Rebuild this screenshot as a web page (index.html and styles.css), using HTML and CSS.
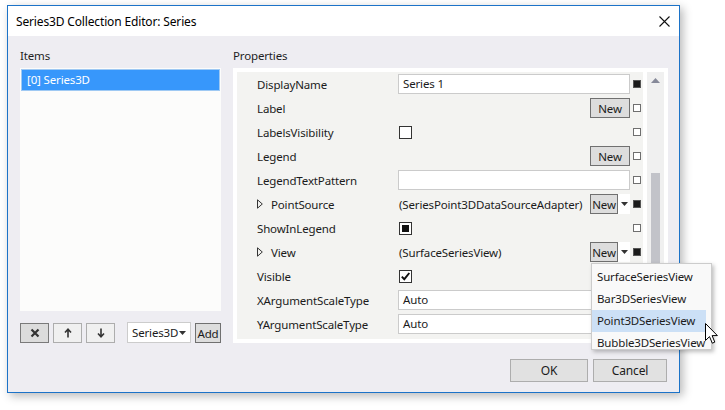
FILE: index.html
```html
<!DOCTYPE html>
<html>
<head>
<meta charset="utf-8">
<title>Series3D Collection Editor</title>
<link rel="stylesheet" href="styles.css">
</head>
<body>
<div class="window">
  <div class="titlebar">
    <span class="title">Series3D Collection Editor: Series</span>
    <svg class="close" width="11" height="11" viewBox="0 0 11 11"><path d="M0.5 0.5L10.5 10.5M10.5 0.5L0.5 10.5" stroke="#111" stroke-width="1.1"/></svg>
  </div>
  <div class="content">
    <div class="main">
      <div class="col-left">
        <div class="heading">Items</div>
        <div class="list">
          <div class="list-item selected">[0] Series3D</div>
        </div>
        <div class="toolbar">
          <button class="tb tb-dark"><svg width="10" height="10" viewBox="0 0 10 10"><path d="M1.5 1.5L8.5 8.5M8.5 1.5L1.5 8.5" stroke="#333" stroke-width="2.2"/></svg></button>
          <button class="tb"><svg width="8" height="10" viewBox="0 0 8 10"><path d="M4 9.5V2M1 4.5L4 1.2L7 4.5" stroke="#333" stroke-width="1.6" fill="none"/></svg></button>
          <button class="tb"><svg width="8" height="10" viewBox="0 0 8 10"><path d="M4 0.5V8M1 5.5L4 8.8L7 5.5" stroke="#333" stroke-width="1.6" fill="none"/></svg></button>
          <div class="combo"><span>Series3D</span><svg width="7" height="4" viewBox="0 0 7 4"><path d="M0 0H7L3.5 4Z" fill="#333"/></svg></div>
          <button class="add">Add</button>
        </div>
      </div>
      <div class="col-right">
        <div class="heading">Properties</div>
        <div class="panel">
          <div class="grid">
            <div class="row">
              <div class="name">DisplayName</div>
              <div class="value"><div class="textbox">Series 1</div></div>
              <div class="mark"><span class="sq filled"></span></div>
            </div>
            <div class="row">
              <div class="name">Label</div>
              <div class="value"><span class="fill"></span><button class="new">New</button></div>
              <div class="mark"><span class="sq"></span></div>
            </div>
            <div class="row">
              <div class="name">LabelsVisibility</div>
              <div class="value"><span class="check"></span></div>
              <div class="mark"><span class="sq"></span></div>
            </div>
            <div class="row">
              <div class="name">Legend</div>
              <div class="value"><span class="fill"></span><button class="new">New</button></div>
              <div class="mark"><span class="sq"></span></div>
            </div>
            <div class="row">
              <div class="name">LegendTextPattern</div>
              <div class="value"><div class="textbox"></div></div>
              <div class="mark"><span class="sq"></span></div>
            </div>
            <div class="row">
              <div class="name exp"><svg class="tri" width="6" height="10" viewBox="0 0 6 10"><path d="M0.5 0.8L5.3 5L0.5 9.2Z" fill="none" stroke="#333" stroke-width="1"/></svg>PointSource</div>
              <div class="value"><span class="fill text">(SeriesPoint3DDataSourceAdapter)</span><button class="new small">New</button><span class="caret"><svg width="7" height="4" viewBox="0 0 7 4"><path d="M0 0H7L3.5 4Z" fill="#333"/></svg></span></div>
              <div class="mark"><span class="sq filled"></span></div>
            </div>
            <div class="row">
              <div class="name">ShowInLegend</div>
              <div class="value"><span class="check"><span class="ind"></span></span></div>
              <div class="mark"><span class="sq"></span></div>
            </div>
            <div class="row">
              <div class="name exp"><svg class="tri" width="6" height="10" viewBox="0 0 6 10"><path d="M0.5 0.8L5.3 5L0.5 9.2Z" fill="none" stroke="#333" stroke-width="1"/></svg>View</div>
              <div class="value"><span class="fill text">(SurfaceSeriesView)</span><button class="new small">New</button><span class="caret"><svg width="7" height="4" viewBox="0 0 7 4"><path d="M0 0H7L3.5 4Z" fill="#333"/></svg></span></div>
              <div class="mark"><span class="sq filled"></span></div>
            </div>
            <div class="row">
              <div class="name">Visible</div>
              <div class="value"><span class="check"><svg width="11" height="11" viewBox="0 0 11 11"><path d="M1.8 5.6L4.3 8.2L9.3 2" fill="none" stroke="#111" stroke-width="1.9"/></svg></span></div>
              <div class="mark"><span class="sq"></span></div>
            </div>
            <div class="row">
              <div class="name">XArgumentScaleType</div>
              <div class="value"><div class="textbox">Auto</div></div>
              <div class="mark"><span class="sq"></span></div>
            </div>
            <div class="row">
              <div class="name">YArgumentScaleType</div>
              <div class="value"><div class="textbox">Auto</div></div>
              <div class="mark"><span class="sq"></span></div>
            </div>
          </div>
          <div class="scrollbar">
            <div class="sb-arrow"><svg width="9" height="5" viewBox="0 0 9 5"><path d="M0 5L4.5 0L9 5Z" fill="#868999"/></svg></div>
            <div class="sb-track"><div class="thumb"></div></div>
            <div class="sb-arrow"><svg width="9" height="5" viewBox="0 0 9 5"><path d="M0 0L4.5 5L9 0Z" fill="#868999"/></svg></div>
          </div>
        </div>
      </div>
    </div>
    <div class="footer">
      <button class="btn">OK</button>
      <button class="btn btn-cancel">Cancel</button>
    </div>
  </div>
</div>
<div class="popup">
  <div class="pop-item">SurfaceSeriesView</div>
  <div class="pop-item">Bar3DSeriesView</div>
  <div class="pop-item hover">Point3DSeriesView</div>
  <div class="pop-item">Bubble3DSeriesView</div>
</div>
<svg class="cursor" width="14" height="22" viewBox="0 0 14 22"><path d="M0.5 0.5V17.5L4.5 13.6L7.3 20.2L9.8 19.1L7.1 12.6H12.4Z" fill="#fff" stroke="#000" stroke-width="1" stroke-linejoin="miter"/></svg>
</body>
</html>
```
FILE: styles.css
```css
* { box-sizing: border-box; }
html, body { margin: 0; padding: 0; background: #ffffff; }
body {
  font-family: "Noto Sans", "Open Sans", "DejaVu Sans", sans-serif;
  font-size: 11.5px;
  letter-spacing: -0.15px;
  color: #1b1b1b;
  width: 725px;
  height: 410px;
  overflow: hidden;
}
button {
  font-family: inherit;
  font-size: inherit;
  letter-spacing: inherit;
  color: inherit;
  padding: 0;
  margin: 0;
}
.window {
  margin: 5px 0 0 7px;
  width: 673px;
  height: 388px;
  border: 1px solid #1c73c8;
  box-shadow: 3px 3px 9px rgba(0, 0, 0, 0.28);
  display: flex;
  flex-direction: column;
}
.titlebar {
  height: 30px;
  flex: none;
  background: #ffffff;
  display: flex;
  align-items: center;
  justify-content: space-between;
  padding: 0 9px 0 8px;
  font-size: 12px;
  color: #000;
}
.content {
  flex: 1;
  background: #eeedf2;
  padding: 12px 11px 0 12px;
  display: flex;
  flex-direction: column;
}
.main {
  display: grid;
  grid-template-columns: 201px 435px;
  column-gap: 12px;
  height: 295px;
}
.col-left, .col-right {
  display: flex;
  flex-direction: column;
}
.heading {
  height: 16px;
  line-height: 16px;
  margin-bottom: 4px;
  color: #1e1e1e;
}
.list {
  height: 243px;
  background: #fcfcfb;
  padding: 1px;
}
.list-item {
  height: 22px;
  line-height: 20px;
  padding-left: 5px;
}
.list-item.selected {
  background: #3797fb;
  border: 1px solid #9fc9f3;
  color: #ffffff;
}
.toolbar {
  margin-top: 12px;
  height: 20px;
  display: flex;
  gap: 4px;
}
.tb {
  width: 29px;
  height: 20px;
  background: #f0f0f0;
  border: 1px solid #adadad;
  display: flex;
  align-items: center;
  justify-content: center;
}
.tb-dark {
  background: #dcdcdc;
  border-color: #7a7a7a;
}
.combo {
  margin-left: 8px;
  width: 64px;
  height: 21px;
  margin-top: -1px;
  background: #ffffff;
  border: 1px solid #cccccc;
  display: flex;
  align-items: center;
  justify-content: space-between;
  padding: 0 4px 0 4px;
}
.add {
  width: 26px;
  height: 20px;
  background: #dddddd;
  border: 1px solid #707070;
}
.panel {
  height: 275px;
  background: #ffffff;
  padding: 4px;
  display: flex;
  gap: 4px;
}
.grid {
  width: 406px;
  background: #f3f3f1;
  overflow: hidden;
}
.row {
  height: 24px;
  display: flex;
  align-items: center;
}
.name {
  width: 161px;
  padding-left: 20px;
  display: flex;
  align-items: center;
  white-space: nowrap;
}
.tri { margin-right: 8px; }
.value {
  width: 232px;
  height: 20px;
  display: flex;
  align-items: center;
  white-space: nowrap;
}
.fill { flex: 1; }
.text { padding-left: 1px; overflow: hidden; }
.textbox {
  width: 100%;
  height: 20px;
  line-height: 18px;
  background: #ffffff;
  border: 1px solid #cbcbcb;
  padding-left: 4px;
}
.new {
  width: 40px;
  height: 20px;
  background: #dddddd;
  border: 1px solid #707070;
}
.new.small { width: 28px; }
.caret {
  width: 12px;
  height: 20px;
  display: flex;
  align-items: center;
  justify-content: center;
  background: #ffffff;
}
.check {
  width: 13px;
  height: 13px;
  margin-left: 1px;
  border: 1px solid #333333;
  background: #ffffff;
  display: flex;
  align-items: center;
  justify-content: center;
}
.ind {
  width: 7px;
  height: 7px;
  background: #111;
}
.mark {
  width: 13px;
  display: flex;
  align-items: center;
  padding-left: 3px;
}
.sq {
  width: 8px;
  height: 8px;
  border: 1px solid #6f6f6f;
  background: #ffffff;
}
.sq.filled {
  background: #1a1a1a;
  border-color: #555555;
}
.scrollbar {
  width: 17px;
  background: #f0f0f0;
  display: flex;
  flex-direction: column;
}
.sb-arrow {
  height: 17px;
  display: flex;
  align-items: center;
  justify-content: center;
}
.sb-track {
  flex: 1;
  padding: 84px 4px 0 4px;
}
.thumb {
  height: 150px;
  background: #c2c3c9;
}
.footer {
  display: flex;
  justify-content: flex-end;
  gap: 5px;
  margin-top: 16px;
  padding-right: 1px;
}
.btn {
  width: 78px;
  height: 23px;
  background: #e1e1e1;
  border: 1px solid #adadad;
  font-size: 12px;
}
.btn-cancel { width: 74px; }
.popup {
  position: absolute;
  left: 591px;
  top: 263px;
  width: 121px;
  height: 87px;
  background: #f9f9f9;
  border: 1px solid #cccccc;
  box-shadow: 2px 2px 4px rgba(0, 0, 0, 0.25);
  padding: 2px 5px 0 0;
}
.pop-item {
  height: 22px;
  line-height: 22px;
  padding-left: 5px;
  white-space: nowrap;
}
.pop-item.hover {
  background: #cce0f6;
}
.cursor {
  position: absolute;
  left: 705px;
  top: 323px;
}
```
